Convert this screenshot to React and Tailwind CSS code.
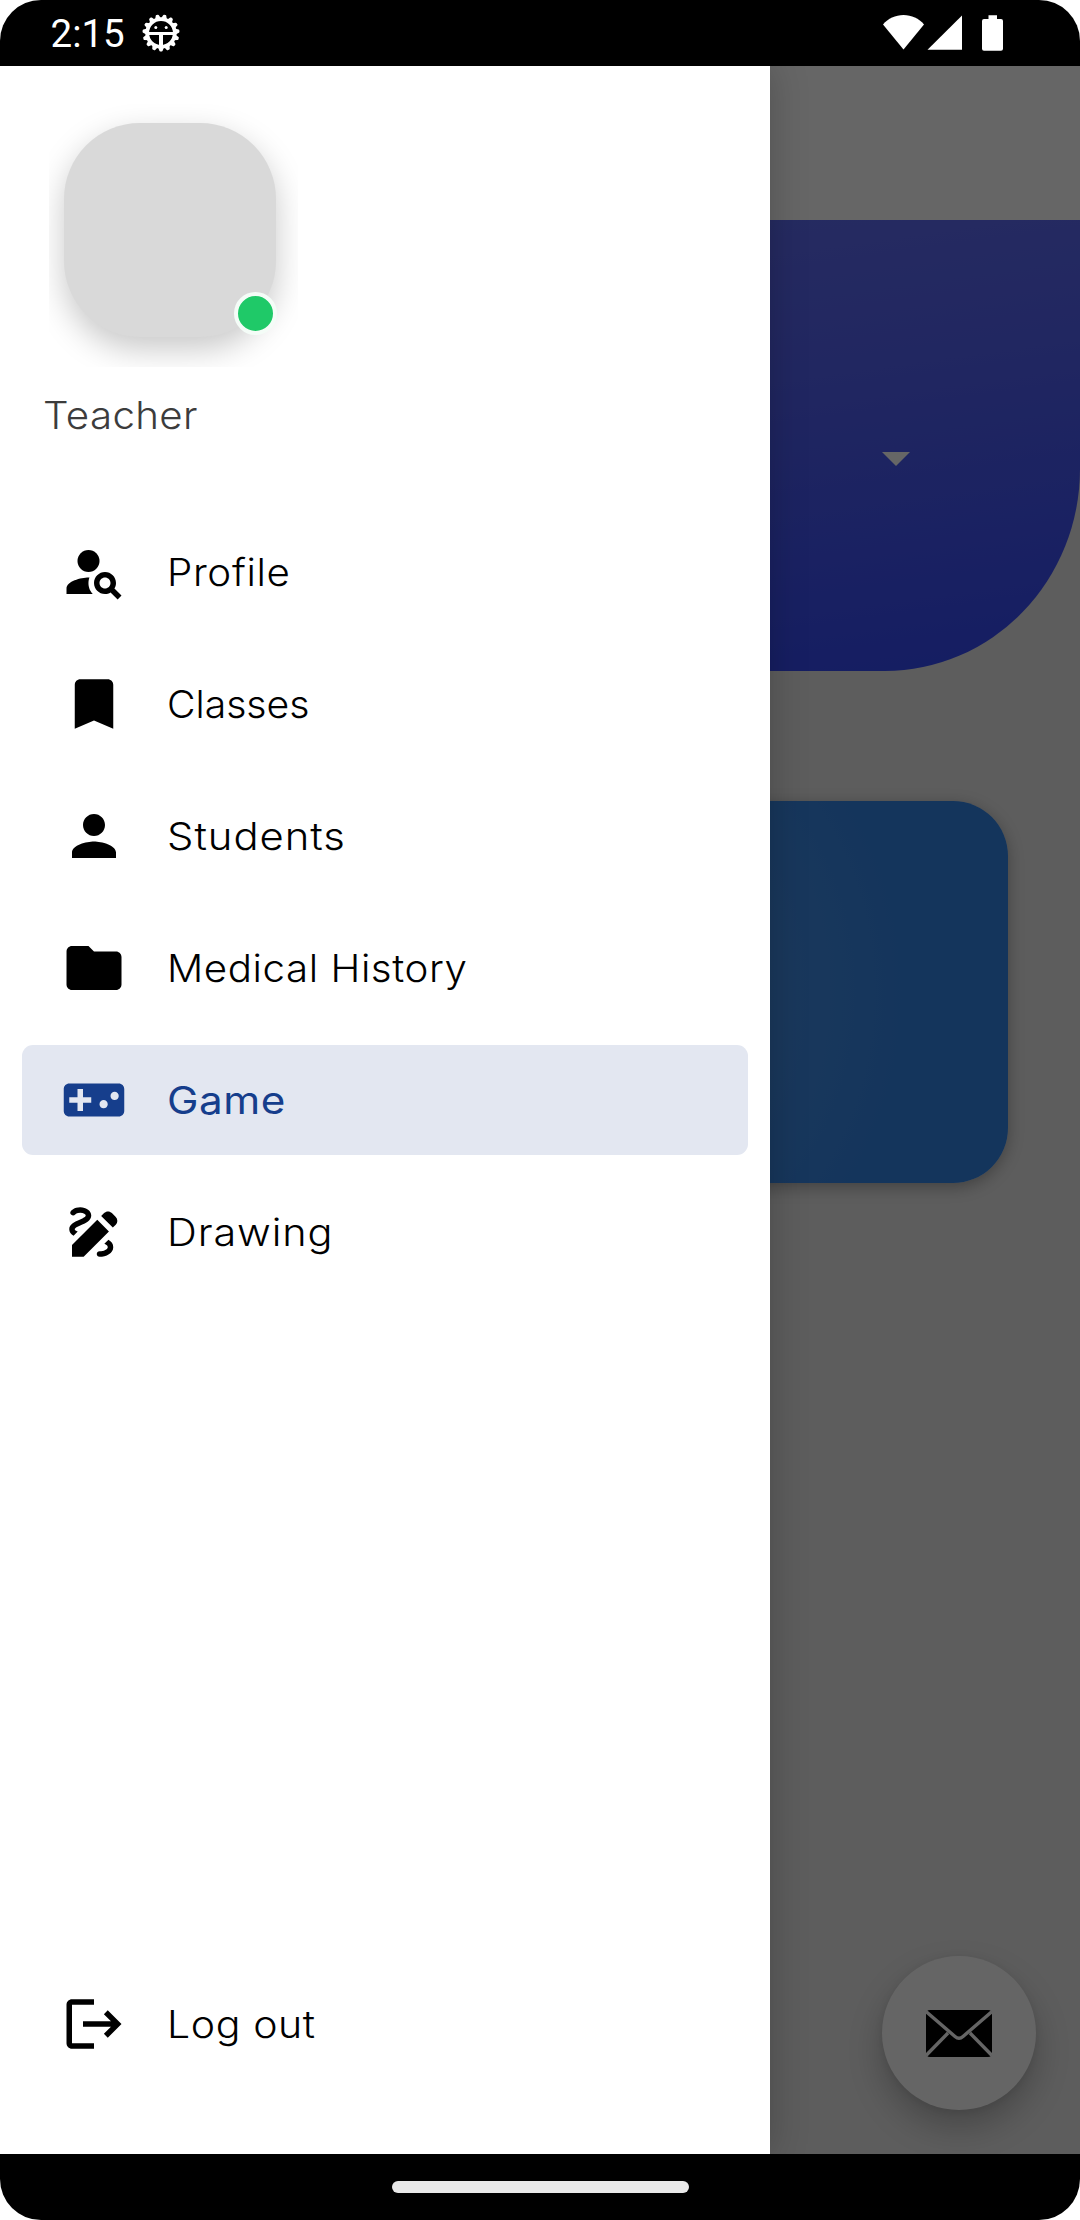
import {
  MdPersonSearch,
  MdBookmark,
  MdPerson,
  MdFolder,
  MdVideogameAsset,
  MdDraw,
  MdLogout,
} from "react-icons/md";

const menu = [
  { label: "Profile", icon: MdPersonSearch, fit: "scale-x-[1.06] tracking-[0.6px]" },
  { label: "Classes", icon: MdBookmark, fit: "scale-x-[1.03] tracking-normal" },
  { label: "Students", icon: MdPerson, fit: "scale-x-[1.1] tracking-[0.88px]" },
  { label: "Medical History", icon: MdFolder, fit: "scale-x-[1.06] tracking-[0.53px]" },
  { label: "Game", icon: MdVideogameAsset, fit: "scale-x-[1.11] tracking-[0.5px]", active: true },
  { label: "Drawing", icon: MdDraw, fit: "scale-x-[1.09] tracking-[0.8px]" },
];

function DebugIcon() {
  const teeth = Array.from({ length: 15 }, (_, i) => 90 + i * 24);
  return (
    <svg viewBox="-20 -20 40 40" className="ml-[16.500px] h-10 w-10" fill="none" stroke="white">
      <circle r="13.8" strokeWidth="3.8" />
      {teeth.map((angle) => (
        <path key={angle} d="M14 -2L17.5 -0.7V0.7L14 2Z" fill="white" strokeWidth="2" strokeLinejoin="round" transform={`rotate(${angle})`} />
      ))}
      <path d="M-13 0.4H13" strokeWidth="3" />
      <path d="M0 1V13" strokeWidth="4" />
      <circle cx="-5.2" cy="-5.6" r="1.5" fill="white" stroke="none" />
      <circle cx="5.2" cy="-5.6" r="1.5" fill="white" stroke="none" />
    </svg>
  );
}

function StatusBar() {
  return (
    <header className="flex h-[66px] shrink-0 items-center bg-black pl-[50.5px] pr-[77px]">
      <span className="pt-[3px] font-['Roboto',sans-serif] text-[38.5px] leading-none text-white">2:15</span>
      <DebugIcon />
      <svg viewBox="0 0 41 36" className="ml-auto h-9 w-[41px]" fill="white">
        <path d="M0 9.500C5 3.500 12.500 0 20.500 0S36 3.500 41 9.500L20.500 34.500Z" />
      </svg>
      <svg viewBox="0 0 35 36" className="ml-[3px] h-9 w-[35px]" fill="white">
        <path d="M35 0.500V34.700H0.500Z" />
      </svg>
      <svg viewBox="0 0 21 36" className="ml-5 h-9 w-[21px]" fill="white">
        <path d="M6.500 0.200H15V4H19Q21 4 21 6V33.700Q21 35.700 19 35.700H2Q0 35.700 0 33.700V6Q0 4 2 4H6.500Z" />
      </svg>
    </header>
  );
}

function NavItem({ label, icon: Icon, fit, active }) {
  return (
    <li
      className={
        active
          ? "flex h-[110px] items-center rounded-[11px] bg-[#e3e7f1] pl-[39px] font-normal text-[#163e8c]"
          : "flex h-[110px] items-center rounded-[11px] pl-[39px] font-light text-black"
      }
    >
      <Icon className="h-[66px] w-[66px]" />
      <span className={`ml-[39.5px] origin-left whitespace-nowrap text-[38px] leading-[48px] ${fit}`}>{label}</span>
    </li>
  );
}

function Avatar() {
  return (
    <div className="relative ml-[49px] mt-[38px] h-[263px] w-[249px] overflow-hidden pl-[15px] pt-[18.500px]">
      <div className="h-[214px] w-[212px] rounded-[76px] bg-[#d9d9d9] shadow-[0_12px_32px_rgba(0,0,0,0.22)]" />
      <span className="absolute left-[185px] top-[188px] h-[43px] w-[43px] rounded-full border-4 border-[#f4fcf7] bg-[#1fc968]" />
    </div>
  );
}

function Drawer() {
  return (
    <aside className="absolute inset-y-0 left-0 flex w-[770px] flex-col bg-white shadow-[0_0_36px_rgba(0,0,0,0.22)]">
      <Avatar />
      <p className="ml-[42.5px] mt-[24px] w-fit origin-left scale-x-[1.06] text-[38px] font-light leading-[48px] tracking-[0.33px] text-[#3c3c3c]">
        Teacher
      </p>
      <ul className="mt-[78px] flex flex-col gap-[22px] px-[22px]">
        {menu.map((item) => (
          <NavItem key={item.label} {...item} />
        ))}
      </ul>
      <ul className="mb-[75px] mt-auto px-[22px]">
        <NavItem label="Log out" icon={MdLogout} fit="scale-x-[1.08] tracking-[0.55px]" />
      </ul>
    </aside>
  );
}

function Page() {
  return (
    <section className="h-full bg-[#e8e8e8]">
      <div className="h-[154px] bg-white" />
      <div className="flex h-[451px] justify-end rounded-br-[195px_202px] bg-[linear-gradient(172deg,#6672f4_0%,#5361f2_45%,#3349f6_100%)] pr-[170px] pt-[232px]">
        <svg viewBox="0 0 28 14" className="h-[14px] w-7" fill="white">
          <path d="M0 0H28L14 14Z" />
        </svg>
      </div>
      <div className="mx-[72px] mt-[130px] h-[382px] rounded-[55px] bg-[radial-gradient(circle_at_center,#5c9ce6_0px,#3284e6_380px)] shadow-[0_4px_16px_rgba(0,0,0,0.3)]" />
      <div className="absolute bottom-[44px] right-[44px] flex h-[154px] w-[154px] items-center justify-center rounded-full bg-[#fdfdfd] shadow-[0_17px_34px_rgba(0,0,0,0.24),0_2px_8px_rgba(0,0,0,0.08)]">
        <svg viewBox="0 0 66 47" className="h-[47px] w-[66px]">
          <rect width="66" height="47" rx="4" fill="black" />
          <path d="M0 1.500L29 26.500Q33 30 37 26.500L66 1.500M0 45.500L22 23M66 45.500L44 23" fill="none" stroke="#fdfdfd" strokeWidth="3.400" />
        </svg>
      </div>
    </section>
  );
}

export default function App() {
  return (
    <div className="h-[2220px] w-[1080px] bg-white">
      <div className="flex h-full flex-col overflow-hidden rounded-[41px] bg-white font-['Inter',sans-serif]">
        <StatusBar />
        <main className="relative min-h-0 flex-1 overflow-hidden">
          <Page />
          <div className="absolute inset-0 bg-black/60" />
          <Drawer />
        </main>
        <footer className="flex h-[66px] shrink-0 items-center justify-center bg-black">
          <div className="h-3 w-[297px] rounded-full bg-[#e9e9e9]" />
        </footer>
      </div>
    </div>
  );
}
